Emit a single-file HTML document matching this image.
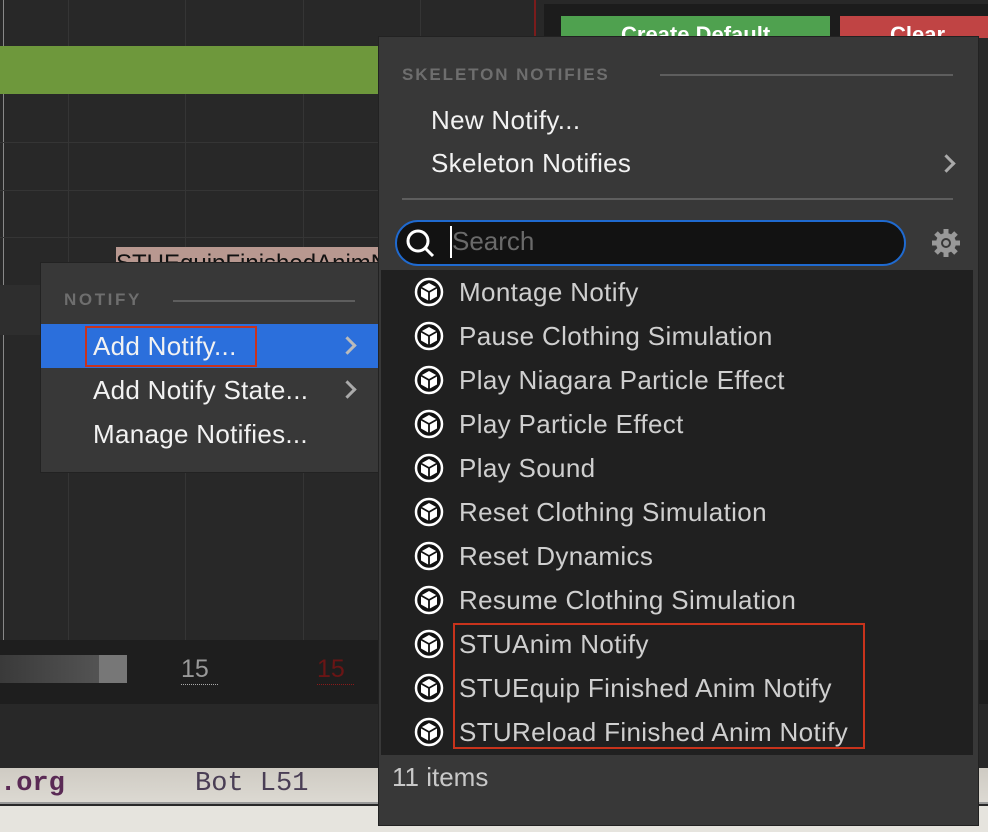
<!DOCTYPE html>
<html><head><meta charset="utf-8"><style>
*{margin:0;padding:0;box-sizing:border-box}
body{width:988px;height:832px;overflow:hidden;background:#282828;font-family:"Liberation Sans",sans-serif;position:relative}
.a{position:absolute}
.vl{position:absolute;top:0;width:1px;height:640px;background:#353535}
.hl{position:absolute;left:0;width:540px;height:1px;background:#353535}
.it{position:absolute;left:459px;font-size:26px;letter-spacing:0.35px;color:#cfcfcf;white-space:nowrap;line-height:30px}
.ic{position:absolute;left:414px;width:30px;height:30px}
.mi{position:absolute;font-size:26px;letter-spacing:0.3px;color:#f2f2f2;white-space:nowrap;line-height:30px}
.chev{position:absolute;width:13px;height:13px;border-right:3px solid #aaa;border-top:3px solid #aaa;transform:rotate(45deg)}
</style></head><body>
<div class="vl" style="left:68px"></div><div class="vl" style="left:185px"></div><div class="vl" style="left:303px"></div><div class="vl" style="left:420px"></div>
<div class="a" style="left:3px;top:0;width:1px;height:640px;background:#888"></div>
<div class="hl" style="top:142px"></div><div class="hl" style="top:190px"></div><div class="hl" style="top:237px"></div>
<div class="a" style="left:0;top:285px;width:540px;height:50px;background:#2e2e2e"></div>
<div class="a" style="left:0;top:46px;width:380px;height:48px;background:#6e983c"></div>
<div class="a" style="left:116px;top:247px;width:264px;height:18px;background:#b89890;overflow:hidden;font-size:24px;line-height:34px;color:#111">STUEquipFinishedAnimNotify</div>
<!-- top right -->
<div class="a" style="left:534px;top:0;width:2px;height:36px;background:#7a1c1c"></div>
<div class="a" style="left:544px;top:4px;width:444px;height:32px;background:#1c1c1c"></div>
<div class="a" style="left:561px;top:16px;width:269px;height:22px;background:#4fa14f;color:#fff;font-weight:bold;font-size:22px;padding-left:60px;line-height:38px;overflow:hidden">Create Default</div>
<div class="a" style="left:840px;top:16px;width:148px;height:22px;background:#c04444;color:#fff;font-weight:bold;font-size:22px;padding-left:50px;line-height:38px;overflow:hidden">Clear</div>
<!-- bottom bar -->
<div class="a" style="left:0;top:640px;width:988px;height:64px;background:#1e1e1e"></div>
<div class="a" style="left:0;top:655px;width:127px;height:28px;background:linear-gradient(90deg,#3a3a3a,#5a5a5a);"></div>
<div class="a" style="left:99px;top:655px;width:28px;height:28px;background:#777"></div>
<div class="a" style="left:181px;top:654px;font-size:25px;color:#999;border-bottom:1px dotted #aaa;width:37px;line-height:30px">15</div>
<div class="a" style="left:317px;top:654px;font-size:25px;color:#6a1515;border-bottom:1px dotted #8a1a1a;width:37px;line-height:30px">15</div>
<div class="a" style="left:0;top:704px;width:988px;height:64px;background:#282828"></div>
<div class="a" style="left:0;top:768px;width:988px;height:36px;background:linear-gradient(#cfcbc3,#dcd9d2);border-bottom:2px solid #9a9a9a"></div>
<div class="a" style="left:0;top:766px;font-family:'Liberation Mono',monospace;font-size:27px;color:#5a2a55;font-weight:bold;line-height:36px">.org</div>
<div class="a" style="left:195px;top:766px;font-family:'Liberation Mono',monospace;font-size:27px;color:#4a3e55;line-height:36px">Bot L51</div>
<div class="a" style="left:0;top:806px;width:988px;height:26px;background:#e6e4de"></div>
<!-- left popup -->
<div class="a" style="left:40px;top:262px;width:340px;height:211px;background:#383838;border:1px solid #222"></div>
<div class="a" style="left:64px;top:290px;font-size:17px;font-weight:bold;letter-spacing:2.6px;color:#6e6e6e">NOTIFY</div>
<div class="a" style="left:173px;top:300px;width:182px;height:2px;background:#5e5e5e"></div>
<div class="a" style="left:41px;top:324px;width:339px;height:44px;background:#2b6fdc"></div>
<div class="a" style="left:85px;top:326px;width:172px;height:41px;border:2px solid #c8331c"></div>
<div class="mi" style="left:93px;top:331px">Add Notify...</div>
<div class="chev" style="left:341px;top:339px;border-color:#bbb"></div>
<div class="mi" style="left:93px;top:375px">Add Notify State...</div>
<div class="chev" style="left:341px;top:383px"></div>
<div class="mi" style="left:93px;top:419px">Manage Notifies...</div>
<!-- main popup -->
<div class="a" style="left:378px;top:36px;width:601px;height:790px;background:#383838;border:1px solid #222"></div>
<div class="a" style="left:402px;top:65px;font-size:17px;font-weight:bold;letter-spacing:1.9px;color:#6e6e6e">SKELETON NOTIFIES</div>
<div class="a" style="left:660px;top:74px;width:293px;height:2px;background:#5e5e5e"></div>
<div class="mi" style="left:431px;top:105px">New Notify...</div>
<div class="mi" style="left:431px;top:148px">Skeleton Notifies</div>
<div class="chev" style="left:940px;top:157px"></div>
<div class="a" style="left:402px;top:198px;width:551px;height:2px;background:#5e5e5e"></div>
<div class="a" style="left:395px;top:220px;width:511px;height:46px;background:#121212;border:2px solid #1f6ad0;border-radius:23px"></div>
<svg class="a" style="left:404px;top:227px" width="32" height="32"><circle cx="14" cy="14" r="10" fill="none" stroke="#fff" stroke-width="3"/><path d="M21 21 L29 29" stroke="#fff" stroke-width="3"/></svg>
<div class="a" style="left:450px;top:226px;width:2px;height:32px;background:#fff"></div>
<div class="a" style="left:452px;top:226px;font-size:26px;color:#6a6a6a;line-height:30px">Search</div>
<svg class="a" style="left:930px;top:227px" width="32" height="32" viewBox="0 0 32 32"><g fill="#999"><circle cx="16" cy="16" r="10"/><g stroke="#999" stroke-width="5"><path d="M16 2V30M2 16H30M6 6L26 26M26 6L6 26"/></g></g><circle cx="16" cy="16" r="5" fill="#383838"/><circle cx="16" cy="16" r="3" fill="#999"/></svg>
<div class="a" style="left:381px;top:270px;width:592px;height:485px;background:#202020"></div>
<div class="a" style="left:392px;top:762px;font-size:26px;color:#c8c8c8;line-height:30px">11 items</div>
<div class="a" style="left:453px;top:623px;width:412px;height:126px;border:2px solid #c8331c"></div>
<div id="list"></div>
<script>
var n=["Montage Notify","Pause Clothing Simulation","Play Niagara Particle Effect","Play Particle Effect","Play Sound","Reset Clothing Simulation","Reset Dynamics","Resume Clothing Simulation","STUAnim Notify","STUEquip Finished Anim Notify","STUReload Finished Anim Notify"];
var h="";n.forEach(function(t,i){var y=277+i*44;
h+='<svg class="ic" style="top:'+y+'px" viewBox="0 0 30 30"><circle cx="15" cy="15" r="13" fill="#111" stroke="#fff" stroke-width="2.5"/><path d="M15 6L23 10.5V19.5L15 24L7 19.5V10.5Z" fill="#fff"/><path d="M7 10.5L15 15L23 10.5M15 15V24" fill="none" stroke="#111" stroke-width="1.8"/></svg>';
h+='<div class="it" style="top:'+(y)+'px">'+t+'</div>';});
document.getElementById("list").innerHTML=h;
</script>
</body></html>
